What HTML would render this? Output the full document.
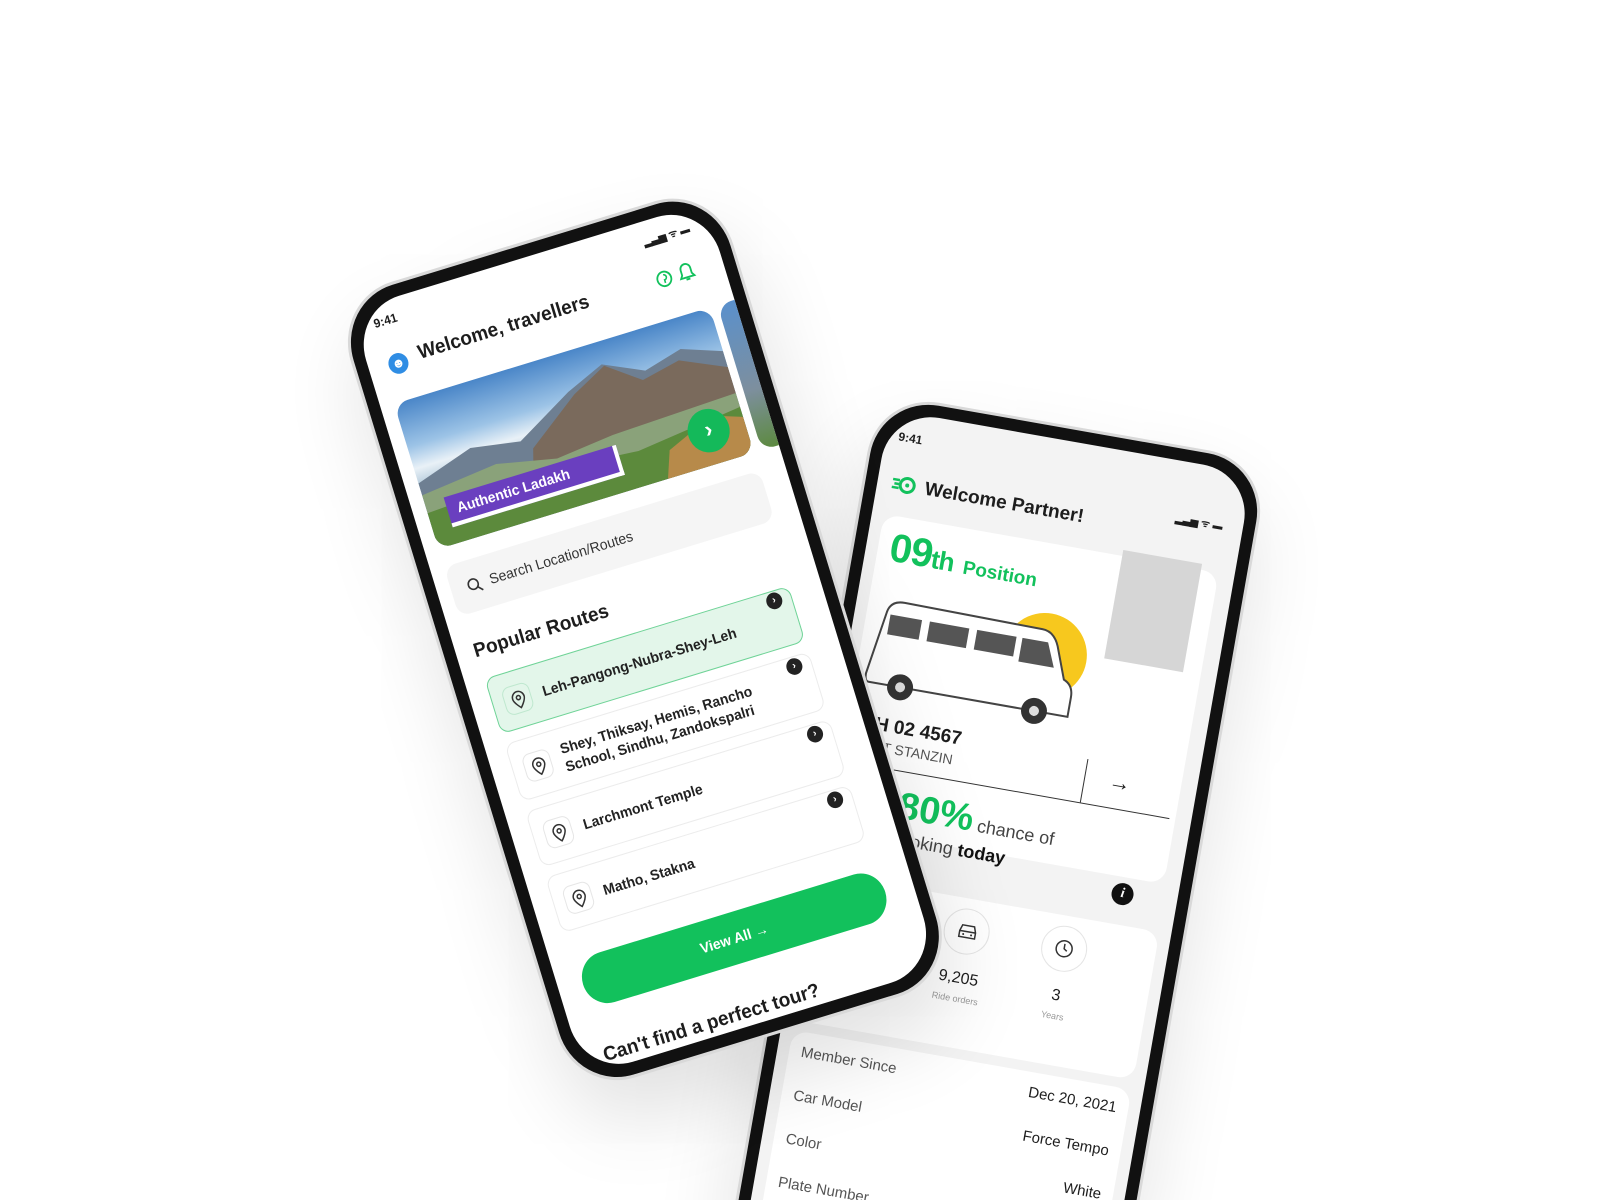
<!DOCTYPE html>
<html style="width:1600px;height:1200px;overflow:hidden"><head><meta charset="utf-8">
<style>
*{box-sizing:border-box;margin:0;padding:0}
body{width:1600px;height:1200px;background:#fff;overflow:hidden;font-family:"Liberation Sans",sans-serif;color:#1d1d1d}
#wrap{position:relative;width:1600px;height:1200px;overflow:hidden}
.abs{position:absolute}
.phone{position:absolute;transform-origin:0 0;border-radius:62px;background:#111;border:3px solid #d9d9d9;box-shadow:0 40px 80px rgba(0,0,0,0.12)}
.screen{position:absolute;left:12px;top:12px;right:12px;bottom:12px;border-radius:50px;overflow:hidden}
.card{position:absolute;border:1px solid #ececec;border-radius:10px;background:#fff}
.pin{position:absolute;width:28px;height:28px;border:1px solid #e6e6e6;border-radius:8px}
.pin svg{position:absolute;left:6px;top:5px}
.go{position:absolute;width:16px;height:16px;border-radius:50%;background:#222;color:#fff;font-size:10px;line-height:16px;text-align:center;font-weight:bold}
.rt{position:absolute;font-size:14px;font-weight:bold;color:#222;line-height:18px}
</style></head><body><div id="wrap">

<!-- Phone 2 (right) -->
<div class="phone" style="left:878px;top:392px;width:398px;height:1000px;transform:rotate(10deg);z-index:1">
 <div class="screen" style="background:#f3f3f3">
  <div class="abs" style="left:13px;top:18px;font-size:12px;font-weight:bold">9:41</div>
  <div class="abs" style="left:300px;top:50px;font-size:10px;font-weight:bold">▂▃▅ ᯤ ▬</div>
  <svg class="abs" style="left:14px;top:62px" width="26" height="20" viewBox="0 0 26 20"><circle cx="16" cy="10" r="7" fill="none" stroke="#12c15c" stroke-width="3"/><circle cx="16" cy="10" r="2" fill="#12c15c"/><path d="M1 6h7M3 10h5M1 14h7" stroke="#12c15c" stroke-width="2.5"/></svg>
  <div class="abs" style="left:48px;top:62px;font-size:19px;font-weight:bold">Welcome Partner!</div>
  <div class="abs" style="left:12px;top:104px;width:340px;height:316px;background:#fff;border-radius:16px"></div>
  <div class="abs" style="left:254px;top:98px;width:80px;height:110px;background:#d6d6d6"></div>
  <div class="abs" style="left:24px;top:114px;color:#12c15c;font-weight:bold;font-size:40px;letter-spacing:-1px">09<span style="font-size:26px">th</span> <span style="font-size:19px;letter-spacing:0">Position</span></div>
  <div class="abs" style="left:153px;top:173px;width:84px;height:84px;border-radius:50%;background:#f7c81e"></div>
  <svg class="abs" style="left:18px;top:180px" width="220" height="115" viewBox="0 0 220 115">
   <path d="M14 20 Q16 8 30 8 L170 10 Q182 10 188 24 L200 56 Q210 60 210 72 L210 92 L8 92 Q4 92 4 84 Z" fill="#fff" stroke="#444" stroke-width="2"/>
   <rect x="18" y="22" width="32" height="20" fill="#555"/><rect x="58" y="22" width="40" height="20" fill="#555"/><rect x="106" y="22" width="40" height="20" fill="#555"/><path d="M152 22 H178 L188 46 H152Z" fill="#555"/>
   <circle cx="40" cy="92" r="13" fill="#333"/><circle cx="40" cy="92" r="5" fill="#ddd"/>
   <circle cx="176" cy="92" r="13" fill="#333"/><circle cx="176" cy="92" r="5" fill="#ddd"/>
  </svg>
  <div class="abs" style="left:24px;top:302px;font-size:19px;font-weight:bold">MH 02 4567</div>
  <div class="abs" style="left:24px;top:326px;font-size:14px;color:#555">TSET STANZIN</div>
  <div class="abs" style="left:255px;top:310px;width:1px;height:44px;background:#333"></div>
  <div class="abs" style="left:12px;top:354px;width:334px;height:1px;background:#333"></div>
  <div class="abs" style="left:280px;top:315px;font-size:22px">→</div>
  <div class="abs" style="left:30px;top:368px;font-size:18px;color:#444;white-space:nowrap">Have <span style="color:#12c15c;font-weight:bold;font-size:38px">80%</span> chance of</div>
  <div class="abs" style="left:30px;top:412px;font-size:18px;color:#444;white-space:nowrap">get a booking <b style="color:#111">today</b></div>
  <div class="abs" style="left:302px;top:426px;width:22px;height:22px;border-radius:50%;background:#111;color:#fff;font-size:14px;font-weight:bold;font-style:italic;text-align:center;line-height:22px;font-family:'Liberation Serif',serif">i</div>
  <div class="abs" style="left:12px;top:468px;width:344px;height:150px;background:#fff;border-radius:16px"></div>
  <div class="abs" style="left:143px;top:478px;width:46px;height:46px;border-radius:50%;border:1px solid #e5e5e5"><svg style="margin:12px" width="22" height="20" viewBox="0 0 22 20"><path d="M3 10l2-6h12l2 6v6H3z M3 10h16" fill="none" stroke="#333" stroke-width="1.5"/><circle cx="7" cy="13" r="1" fill="#333"/><circle cx="15" cy="13" r="1" fill="#333"/></svg></div>
  <div class="abs" style="left:242px;top:478px;width:46px;height:46px;border-radius:50%;border:1px solid #e5e5e5"><svg style="margin:12px" width="20" height="20" viewBox="0 0 20 20"><circle cx="10" cy="10" r="8" fill="none" stroke="#333" stroke-width="1.5"/><path d="M10 5v5l3 2" fill="none" stroke="#333" stroke-width="1.5"/></svg></div>
  <div class="abs" style="left:136px;top:540px;width:60px;text-align:center;font-size:16px">9,205</div>
  <div class="abs" style="left:126px;top:564px;width:80px;text-align:center;font-size:9px;color:#999">Ride orders</div>
  <div class="abs" style="left:235px;top:540px;width:60px;text-align:center;font-size:16px">3</div>
  <div class="abs" style="left:235px;top:564px;width:60px;text-align:center;font-size:9px;color:#999">Years</div>
  <div class="abs" style="left:12px;top:628px;width:344px;height:300px;background:#fff;border-radius:16px"></div>
  <div class="abs" style="left:24px;top:640px;font-size:15px;color:#555">Member Since</div>
  <div class="abs" style="left:24px;top:684px;font-size:15px;color:#555">Car Model</div>
  <div class="abs" style="left:24px;top:728px;font-size:15px;color:#555">Color</div>
  <div class="abs" style="left:24px;top:772px;font-size:15px;color:#555">Plate Number</div>
  <div class="abs" style="left:204px;top:640px;width:140px;text-align:right;font-size:15px">Dec 20, 2021</div>
  <div class="abs" style="left:204px;top:684px;width:140px;text-align:right;font-size:15px">Force Tempo</div>
  <div class="abs" style="left:204px;top:728px;width:140px;text-align:right;font-size:15px">White</div>
 </div>
</div>

<!-- Phone 1 (left) -->
<div class="phone" style="left:332px;top:300px;width:400px;height:800px;transform:rotate(-17deg) scale(1,1.04);z-index:2">
 <div class="screen" style="background:#fff">
  <div class="abs" style="left:18px;top:12px;font-size:12px;font-weight:bold">9:41</div>
  <div class="abs" style="left:300px;top:12px;font-size:10px;font-weight:bold">▂▃▅ ᯤ ▬</div>
  <div class="abs" style="left:20px;top:52px;width:20px;height:20px;border-radius:50%;background:#2f8de4;color:#fff;font-size:13px;text-align:center;line-height:20px">☻</div>
  <div class="abs" style="left:52px;top:48px;font-size:19px;font-weight:bold">Welcome, travellers</div>
  <svg class="abs" style="left:300px;top:48px" width="44" height="22" viewBox="0 0 44 22"><circle cx="9" cy="11" r="7" fill="none" stroke="#12c15c" stroke-width="1.8"/><path d="M9 7a2.5 2.5 0 1 1 0 5v3" fill="none" stroke="#12c15c" stroke-width="1.6"/><path d="M25 16h14l-2-3v-5a5 5 0 0 0-10 0v5z M30 18h4" fill="none" stroke="#12c15c" stroke-width="1.8"/></svg>
  <div class="abs" style="left:14px;top:98px;width:330px;height:146px;border-radius:14px;overflow:hidden;background:linear-gradient(#4a86c8 0%,#9cc3e6 30%,#e9f1f7 45%,#bcd0df 55%)">
   <svg width="330" height="146" viewBox="0 0 330 146" style="position:absolute;left:0;top:0">
    <path d="M0 80 L60 62 L110 70 L170 38 L210 22 L250 40 L290 30 L330 44 L330 146 L0 146Z" fill="#6e7f92"/>
    <path d="M120 80 L175 42 L212 24 L245 48 L285 40 L330 60 L330 146 L100 146Z" fill="#7a6a5c"/>
    <path d="M0 92 L80 84 L140 96 L200 90 L330 86 L330 146 L0 146Z" fill="#8aa27a"/>
    <path d="M0 110 L120 104 L220 112 L330 100 L330 146 L0 146Z" fill="#5c8a3c"/>
    <path d="M250 120 L300 100 L330 110 L330 146 L240 146Z" fill="#b78a4a"/>
   </svg>
   <div class="abs" style="left:20px;top:100px;width:180px;height:30px;background:#6a3fbf;border-right:4px solid #fff;border-bottom:4px solid #fff;color:#fff;font-weight:bold;font-size:14px;line-height:26px;padding-left:10px">Authentic Ladakh</div>
   <div class="abs" style="left:272px;top:92px;width:42px;height:42px;border-radius:50%;background:#14b95a;color:#fff;font-size:22px;text-align:center;line-height:40px;font-weight:bold">›</div>
  </div>
  <div class="abs" style="left:352px;top:98px;width:40px;height:146px;border-radius:14px;background:linear-gradient(#5a90cc,#7d8f9e 60%,#5d8a40)"></div>
  <div class="abs" style="left:14px;top:262px;width:330px;height:50px;border-radius:12px;background:#f5f5f5"></div>
  <svg class="abs" style="left:30px;top:279px" width="16" height="16" viewBox="0 0 16 16"><circle cx="7" cy="7" r="5" fill="none" stroke="#333" stroke-width="1.6"/><path d="M11 11l4 4" stroke="#333" stroke-width="1.6"/></svg>
  <div class="abs" style="left:54px;top:278px;font-size:14px;color:#333">Search Location/Routes</div>
  <div class="abs" style="left:18px;top:338px;font-size:19px;font-weight:bold">Popular Routes</div>
  <div class="card" style="left:20px;top:376px;width:318px;height:56px;background:#e3f6ea;border-color:#6fd397"></div>
  <div class="card" style="left:20px;top:442px;width:318px;height:58px"></div>
  <div class="card" style="left:20px;top:510px;width:318px;height:56px"></div>
  <div class="card" style="left:20px;top:576px;width:318px;height:56px"></div>
  <div class="pin" style="left:32px;top:390px;border-color:#bfe8cf"><svg width="16" height="18" viewBox="0 0 16 18"><path d="M8 17s6-6 6-10A6 6 0 0 0 2 7c0 4 6 10 6 10z" fill="none" stroke="#333" stroke-width="1.5"/><circle cx="8" cy="7" r="2" fill="none" stroke="#333" stroke-width="1.5"/></svg></div>
  <div class="pin" style="left:32px;top:457px"><svg width="16" height="18" viewBox="0 0 16 18"><path d="M8 17s6-6 6-10A6 6 0 0 0 2 7c0 4 6 10 6 10z" fill="none" stroke="#333" stroke-width="1.5"/><circle cx="8" cy="7" r="2" fill="none" stroke="#333" stroke-width="1.5"/></svg></div>
  <div class="pin" style="left:32px;top:524px"><svg width="16" height="18" viewBox="0 0 16 18"><path d="M8 17s6-6 6-10A6 6 0 0 0 2 7c0 4 6 10 6 10z" fill="none" stroke="#333" stroke-width="1.5"/><circle cx="8" cy="7" r="2" fill="none" stroke="#333" stroke-width="1.5"/></svg></div>
  <div class="pin" style="left:32px;top:590px"><svg width="16" height="18" viewBox="0 0 16 18"><path d="M8 17s6-6 6-10A6 6 0 0 0 2 7c0 4 6 10 6 10z" fill="none" stroke="#333" stroke-width="1.5"/><circle cx="8" cy="7" r="2" fill="none" stroke="#333" stroke-width="1.5"/></svg></div>
  <div class="rt" style="left:72px;top:395px">Leh-Pangong-Nubra-Shey-Leh</div>
  <div class="rt" style="left:72px;top:453px">Shey, Thiksay, Hemis, Rancho<br>School, Sindhu, Zandokspalri</div>
  <div class="rt" style="left:72px;top:529px">Larchmont Temple</div>
  <div class="rt" style="left:72px;top:595px">Matho, Stakna</div>
  <div class="go" style="left:312px;top:378px">›</div>
  <div class="go" style="left:312px;top:444px">›</div>
  <div class="go" style="left:312px;top:512px">›</div>
  <div class="go" style="left:312px;top:578px">›</div>
  <div class="abs" style="left:25px;top:660px;width:316px;height:50px;border-radius:25px;background:#12c15c;color:#fff;font-size:14px;font-weight:bold;text-align:center;line-height:50px">View All →</div>
  <div class="abs" style="left:24px;top:746px;font-size:19px;font-weight:bold;white-space:nowrap">Can't find a perfect tour?</div>
 </div>
</div>
</div></body></html>
